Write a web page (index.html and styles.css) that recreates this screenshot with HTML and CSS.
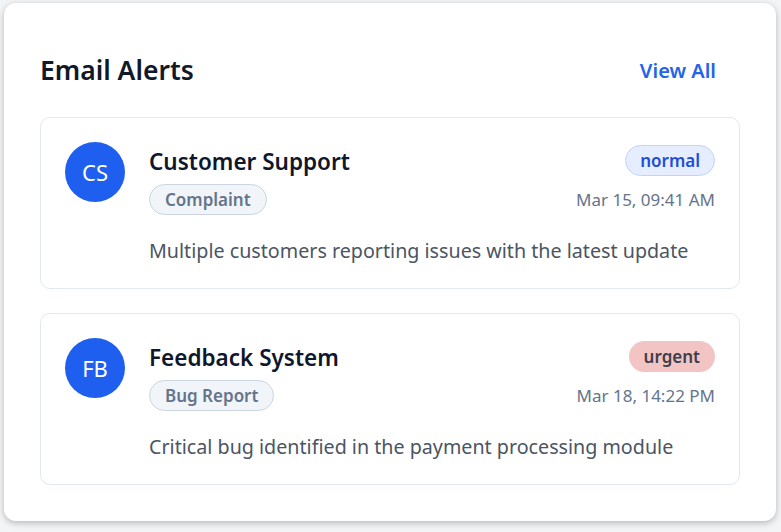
FILE: index.html
```html
<!DOCTYPE html>
<html lang="en">
<head>
    <meta charset="UTF-8">
    <meta name="viewport" content="width=device-width, initial-scale=1.0">
    <title>Email Alerts</title>
    <link rel="stylesheet" href="styles.css">
</head>
<body>
    <div class="panel">
        <div class="panel-header">
            <h2 class="panel-title">Email Alerts</h2>
            <a class="view-all" href="#">View All</a>
        </div>
        <div class="alert-list">
            <div class="alert-card">
                <div class="avatar">CS</div>
                <div class="alert-body">
                    <div class="alert-row alert-top">
                        <span class="sender">Customer Support</span>
                        <span class="priority priority-normal">normal</span>
                    </div>
                    <div class="alert-row">
                        <span class="tag">Complaint</span>
                        <span class="time">Mar 15, 09:41 AM</span>
                    </div>
                    <p class="message">Multiple customers reporting issues with the latest update</p>
                </div>
            </div>
            <div class="alert-card">
                <div class="avatar">FB</div>
                <div class="alert-body">
                    <div class="alert-row alert-top">
                        <span class="sender">Feedback System</span>
                        <span class="priority priority-urgent">urgent</span>
                    </div>
                    <div class="alert-row">
                        <span class="tag">Bug Report</span>
                        <span class="time">Mar 18, 14:22 PM</span>
                    </div>
                    <p class="message">Critical bug identified in the payment processing module</p>
                </div>
            </div>
        </div>
    </div>
</body>
</html>
```

FILE: styles.css
```css
body {
    margin: 0;
    padding: 3px 5px 12px 4px;
    background-color: #f3f4f6;
    font-family: "Noto Sans", "Open Sans", sans-serif;
}
.panel {
    background-color: #fff;
    border-radius: 12px;
    box-shadow: 0 2px 6px rgba(0, 0, 0, 0.25);
    padding: 36px;
}
.panel-header {
    display: flex;
    justify-content: space-between;
    align-items: center;
    padding-right: 24px;
    margin-bottom: 16px;
    height: 62px;
}
.panel-title {
    margin: 0;
    font-size: 26.5px;
    font-weight: 600;
    color: #111827;
}
.view-all {
    color: #2563eb;
    font-size: 20px;
    font-weight: 600;
    text-decoration: none;
}
.alert-list {
    display: flex;
    flex-direction: column;
    gap: 24px;
}
.alert-card {
    display: flex;
    gap: 24px;
    padding: 24px;
    border: 1px solid #e2e8f0;
    border-radius: 10px;
}
.avatar {
    flex: none;
    width: 60px;
    height: 60px;
    border-radius: 50%;
    background-color: #1f5ff0;
    color: #fff;
    font-size: 22px;
    display: flex;
    justify-content: center;
    align-items: center;
}
.alert-body {
    flex: 1;
}
.alert-row {
    display: flex;
    justify-content: space-between;
    align-items: center;
    height: 31px;
}
.alert-top {
    height: 37px;
    margin-bottom: 5px;
}
.sender {
    font-size: 22.5px;
    font-weight: 600;
    color: #0f172a;
    position: relative;
    top: 1px;
}
.priority {
    font-size: 17px;
    line-height: 23px;
    font-weight: 600;
    padding: 3px 14px;
    border-radius: 999px;
    border: 1px solid transparent;
}
.priority-normal {
    background-color: #e5edff;
    border-color: #bfd4fd;
    color: #1d4ed8;
}
.priority-urgent {
    background-color: #f2c4c4;
    color: #3b3f4c;
}
.tag {
    font-size: 17px;
    line-height: 23px;
    font-weight: 600;
    color: #64748b;
    background-color: #f1f5f9;
    border: 1px solid #cbd5e1;
    padding: 3px 15px;
    border-radius: 999px;
}
.time {
    font-size: 17px;
    color: #64748b;
}
.message {
    margin: 22px 0 0;
    font-size: 19.7px;
    line-height: 27px;
    color: #4b5563;
}
```
